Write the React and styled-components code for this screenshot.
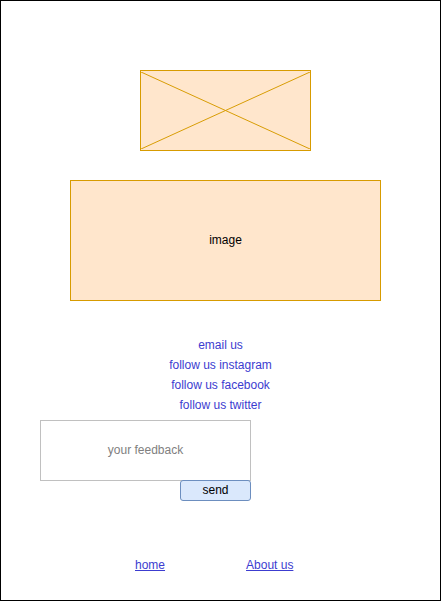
import React from "react"
import styled, { createGlobalStyle } from "styled-components"

const GlobalStyle = createGlobalStyle`
  html, body {
    margin: 0;
    padding: 0;
    background: #fff;
  }
  body {
    font-family: Helvetica, "Liberation Sans", Arial, sans-serif;
  }
`

const Frame = styled.div`
  box-sizing: border-box;
  width: 441px;
  height: 601px;
  border: 1px solid #000;
  display: flex;
  flex-direction: column;
  align-items: flex-start;
  padding-top: 69px;
`

const Placeholder = styled.div`
  box-sizing: border-box;
  margin-left: ${({ left }) => left}px;
  width: ${({ w }) => w}px;
  height: ${({ h }) => h}px;
  margin-top: ${({ top }) => top || 0}px;
  padding-bottom: 2px;
  background: #ffe6cc;
  border: 1px solid #d79b00;
  display: flex;
  align-items: center;
  justify-content: center;
  font-size: 12px;
  color: #000;
`

const Cross = styled.svg`
  width: 100%;
  height: 100%;
  display: block;
  margin-bottom: -2px;
`

const Links = styled.div`
  margin-top: 34px;
  align-self: stretch;
  display: flex;
  flex-direction: column;
  align-items: center;
`

const SocialLink = styled.a`
  font-size: 12px;
  line-height: 20px;
  color: #3c3cd0;
  text-decoration: none;
`

const Feedback = styled.div`
  box-sizing: border-box;
  margin: 5px 0 0 39px;
  width: 211px;
  height: 61px;
  padding-bottom: 2px;
  border: 1px solid #c0c0c0;
  display: flex;
  align-items: center;
  justify-content: center;
  font-size: 12px;
  color: #808080;
`

const SendButton = styled.button`
  box-sizing: border-box;
  margin: -1px 0 0 179px;
  width: 71px;
  height: 21px;
  padding: 0 0 2px;
  background: #dae8fc;
  border: 1px solid #6c8ebf;
  border-radius: 3px;
  font-family: inherit;
  font-size: 12px;
  color: #000;
`

const Footer = styled.div`
  margin-top: 54px;
  display: flex;
  font-size: 12px;
  line-height: 20px;
`

const FooterLink = styled.a`
  margin-left: ${({ left }) => left}px;
  color: #3c3cd0;
  text-decoration: underline;
`

export default function App() {
  return (
    <>
      <GlobalStyle />
      <Frame>
        <Placeholder left={139} w={171} h={81}>
          <Cross viewBox="0 0 169 79" preserveAspectRatio="none">
            <line x1="0" y1="0" x2="169" y2="79" stroke="#d79b00" strokeWidth="1" />
            <line x1="169" y1="0" x2="0" y2="79" stroke="#d79b00" strokeWidth="1" />
          </Cross>
        </Placeholder>
        <Placeholder left={69} w={311} h={121} top={29}>
          image
        </Placeholder>
        <Links>
          <SocialLink>email us</SocialLink>
          <SocialLink>follow us instagram</SocialLink>
          <SocialLink>follow us facebook</SocialLink>
          <SocialLink>follow us twitter</SocialLink>
        </Links>
        <Feedback>your feedback</Feedback>
        <SendButton>send</SendButton>
        <Footer>
          <FooterLink left={134}>home</FooterLink>
          <FooterLink left={81}>About us</FooterLink>
        </Footer>
      </Frame>
    </>
  )
}
